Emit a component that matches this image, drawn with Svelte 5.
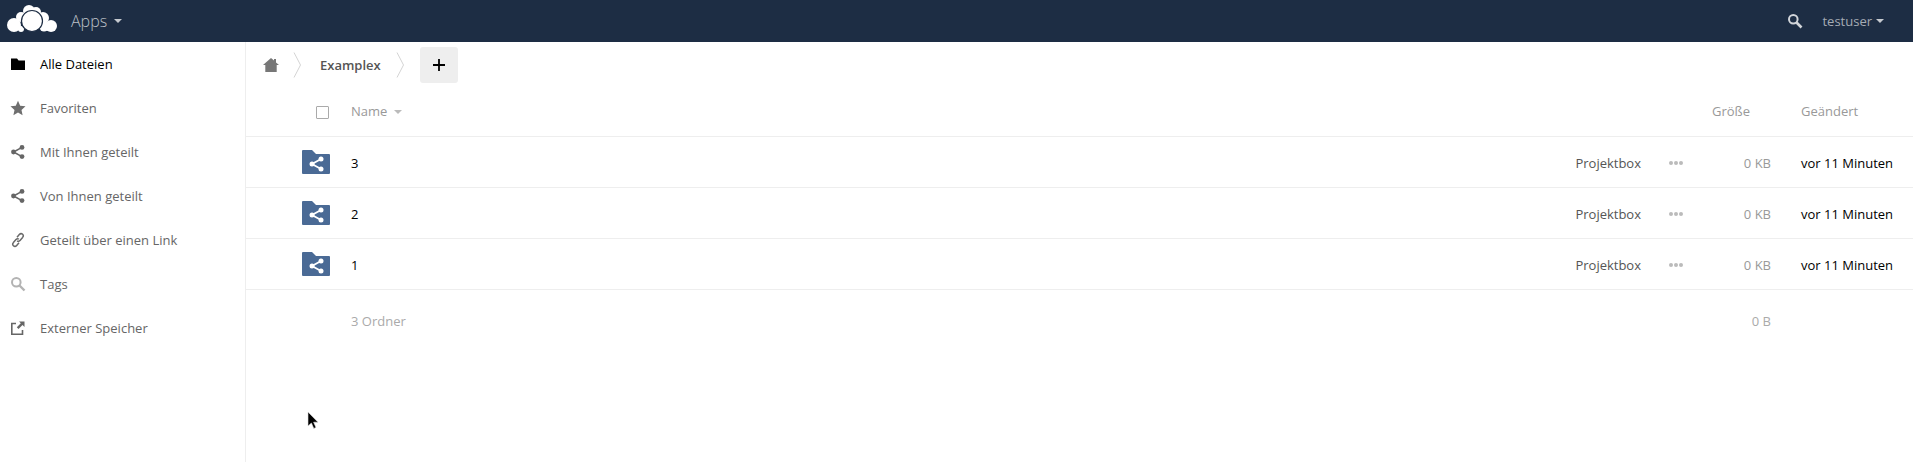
<script>
    const nav = [
        { name: 'Alle Dateien', icon: 'folder', active: true },
        { name: 'Favoriten', icon: 'star' },
        { name: 'Mit Ihnen geteilt', icon: 'share' },
        { name: 'Von Ihnen geteilt', icon: 'share' },
        { name: 'Geteilt über einen Link', icon: 'link' },
        { name: 'Tags', icon: 'search' },
        { name: 'Externer Speicher', icon: 'external' }
    ];
    const folders = ['3', '2', '1'];
</script>

<header>
    <svg class="logo" width="56" height="34" viewBox="0 0 56 34">
        <g transform="translate(-5 -4)">
            <g fill="#fff">
                <circle cx="29" cy="11" r="6"/>
                <circle cx="36" cy="12" r="5"/>
                <circle cx="43" cy="18" r="6"/>
                <circle cx="21" cy="17" r="5"/>
                <circle cx="14" cy="25" r="7"/>
                <circle cx="51" cy="26" r="6"/>
                <circle cx="21" cy="29" r="3"/>
                <circle cx="44" cy="27" r="4.5"/>
            </g>
            <circle cx="32" cy="21" r="10.5" fill="#fff" stroke="#1d2d44" stroke-width="1.2"/>
        </g>
    </svg>
    <span class="apps">Apps</span>
    <span class="caret"></span>
    <svg class="head-search" width="16" height="16" viewBox="0 0 16 16">
        <circle cx="6.3" cy="6.3" r="4.3" fill="none" stroke="#d2d5da" stroke-width="2"/>
        <path d="M9.5 9.5 14.5 14.5" stroke="#d2d5da" stroke-width="2.6"/>
    </svg>
    <span class="user">testuser</span>
    <span class="caret small"></span>
</header>

<div class="page">
    <nav>
        {#each nav as item}
            <a class="nav-item" class:active={item.active} href="#top">
                <svg width="16" height="16" viewBox="0 0 16 16">
                    {#if item.icon == 'folder'}
                        <path d="M1 2.5h6l1.6 2H15V14H1z" fill="#000"/>
                    {:else if item.icon == 'star'}
                        <path d="M8 .8l2.2 4.9 5.3.6-4 3.6 1.1 5.3L8 12.5l-4.6 2.7 1.1-5.3-4-3.6 5.3-.6z" fill="#6f6f6f"/>
                    {:else if item.icon == 'share'}
                        <g fill="#666">
                            <circle cx="3.5" cy="8" r="2.4"/>
                            <circle cx="12" cy="3.4" r="2.4"/>
                            <circle cx="12" cy="12.6" r="2.4"/>
                        </g>
                        <path d="M12 3.4 3.5 8 12 12.6" fill="none" stroke="#666" stroke-width="1.6"/>
                    {:else if item.icon == 'link'}
                        <g fill="none" stroke="#6a6a6a" stroke-width="1.5">
                            <path d="M7 5.2 9.3 2.6c1-1.1 2.4-1.1 3.3-.3s.8 2.1 0 3.1L10 8.4c-.9 1-2 1-2.9.4"/>
                            <path d="M9 10.8 6.7 13.4c-1 1.1-2.4 1.1-3.3.3s-.8-2.1 0-3.1L6 7.6c.9-1 2-1 2.9-.4"/>
                        </g>
                    {:else if item.icon == 'search'}
                        <circle cx="6.3" cy="6.3" r="4.3" fill="none" stroke="#b3b3b3" stroke-width="2"/>
                        <path d="M9.5 9.5 14.5 14.5" stroke="#b3b3b3" stroke-width="2.4"/>
                    {:else}
                        <path d="M6 3.5H1.8v10.7h10.7V10" fill="none" stroke="#666" stroke-width="1.6"/>
                        <path d="M9 1.5h5.5V7l-2-2-4 4L6.8 7.2l4-4z" fill="#666"/>
                    {/if}
                </svg>
                <span>{item.name}</span>
            </a>
        {/each}
    </nav>

    <main>
        <div class="controls">
            <svg class="home" width="16" height="14" viewBox="0 0 16 14">
                <path d="M8 0 11 2.6V1h2v3.4L16 7h-2.3v7H2.3V7H0z" fill="#777"/>
            </svg>
            <svg class="crumb" width="9" height="26" viewBox="0 0 9 26">
                <path d="M1 .5 7.5 13 1 25.5" fill="none" stroke="#d4d4d4"/>
            </svg>
            <span class="dir">Examplex</span>
            <svg class="crumb" width="9" height="26" viewBox="0 0 9 26">
                <path d="M1 .5 7.5 13 1 25.5" fill="none" stroke="#d4d4d4"/>
            </svg>
            <button>
                <svg width="12" height="12" viewBox="0 0 12 12">
                    <path d="M6 0v12M0 6h12" stroke="#000" stroke-width="1.8"/>
                </svg>
            </button>
        </div>

        <div class="row head">
            <span class="check"></span>
            <span class="name">Name</span>
            <span class="sort"></span>
            <span class="size-head">Größe</span>
            <span class="date-head">Geändert</span>
        </div>

        {#each folders as folder}
            <div class="row file">
                <svg class="folder" width="28" height="24" viewBox="0 0 28 24">
                    <path d="M1 0h9l4 4h13a1 1 0 0 1 1 1v18a1 1 0 0 1-1 1H1a1 1 0 0 1-1-1V1a1 1 0 0 1 1-1z" fill="#4a6a95"/>
                    <g fill="#fff">
                        <circle cx="10" cy="14" r="2.5"/>
                        <circle cx="19" cy="9" r="2.5"/>
                        <circle cx="19" cy="19" r="2.5"/>
                    </g>
                    <path d="M19 9 10 14 19 19" fill="none" stroke="#fff" stroke-width="1.8"/>
                </svg>
                <span class="file-name">{folder}</span>
                <span class="owner">Projektbox</span>
                <span class="dots"><i></i><i></i><i></i></span>
                <span class="size">0 KB</span>
                <span class="date">vor 11 Minuten</span>
            </div>
        {/each}

        <div class="summary">
            <span class="count">3 Ordner</span>
            <span class="total">0 B</span>
        </div>
    </main>
</div>

<svg class="cursor" width="13" height="20" viewBox="0 0 13 20">
    <path d="M1 1v14l3.4-3 2.4 5.4 2.2-1-2.4-5.2H11z" fill="#000" stroke="#ddd" stroke-width=".6"/>
</svg>

<style>
:global(body) {
    margin: 0;
    background: #fff;
    font-family: "Open Sans", sans-serif;
    font-size: 13px;
    color: #000;
}

header {
    height: 42px;
    background: #1d2d44;
    display: flex;
    align-items: center;
}

.logo {
    margin-left: 5px;
}

.apps {
    margin-left: 10px;
    font-size: 16px;
    font-weight: 300;
    color: #bcc0c7;
}

.caret {
    margin-left: 7px;
    border: 4px solid transparent;
    border-top: 4px solid #c6cad0;
    border-bottom: 0;
}

.head-search {
    margin-left: auto;
}

.user {
    margin-left: 19px;
    color: #a5abb4;
}

.caret.small {
    margin-left: 4px;
    margin-right: 29px;
}

.page {
    display: flex;
    height: 420px;
}

nav {
    width: 245px;
    flex: none;
    border-right: 1px solid #eee;
}

.nav-item {
    height: 44px;
    display: flex;
    align-items: center;
    gap: 14px;
    padding-left: 10px;
    color: #666;
    text-decoration: none;
}

.nav-item.active {
    color: #000;
}

.nav-item svg {
    flex: none;
}

main {
    flex: 1;
    min-width: 0;
}

.controls {
    height: 46px;
    display: flex;
    align-items: center;
    padding-left: 17px;
    box-sizing: border-box;
}

.home {
    margin-right: 14px;
}

.dir {
    margin: 0 15px 0 18px;
    font-weight: 600;
    color: #555;
}

button {
    width: 38px;
    height: 36px;
    margin-left: 15px;
    padding: 0;
    border: 0;
    border-radius: 3px;
    background: #eee;
    display: flex;
    align-items: center;
    justify-content: center;
}

.row {
    display: flex;
    align-items: center;
    border-bottom: 1px solid #eee;
    box-sizing: border-box;
}

.head {
    height: 49px;
    color: #999;
}

.check {
    width: 11px;
    height: 11px;
    margin-left: 70px;
    border: 1px solid #aaa;
    border-radius: 1px;
}

.name {
    margin-left: 22px;
    padding-bottom: 2px;
}

.sort {
    margin-left: 7px;
    border: 4px solid transparent;
    border-top: 4px solid #bbb;
    border-bottom: 0;
}

.size-head {
    margin-left: auto;
    margin-right: 51px;
    padding-bottom: 2px;
    color: #999;
}

.date-head {
    width: 112px;
    padding-bottom: 2px;
}

.file {
    height: 51px;
}

.folder {
    margin-left: 56px;
}

.file span {
    padding-top: 2px;
}

.file-name {
    margin-left: 21px;
}

.owner {
    margin-left: auto;
    color: #555;
}

.dots {
    margin-left: 28px;
    width: 15px;
    display: flex;
    gap: 1px;
}

.dots i {
    width: 4px;
    height: 4px;
    border-radius: 50%;
    background: #bbb;
}

.size {
    width: 87px;
    margin-right: 30px;
    text-align: right;
    color: #999;
}

.date {
    width: 112px;
    white-space: nowrap;
}

.summary {
    display: flex;
    height: 61px;
    align-items: center;
    color: #aaa;
}

.count {
    margin-left: 105px;
}

.total {
    margin-left: auto;
    margin-right: 142px;
}

/* mouse pointer caught in the shot */
.cursor {
    position: absolute;
    left: 307px;
    top: 411px;
}
</style>
